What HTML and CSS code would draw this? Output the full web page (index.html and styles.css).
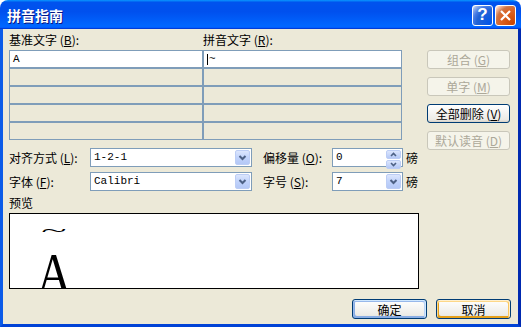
FILE: index.html
```html
<!DOCTYPE html>
<html lang="zh-CN">
<head>
    <meta charset="UTF-8">
    <title>拼音指南</title>
    <link rel="stylesheet" href="styles.css">
</head>
<body>
<div class="window">
    <div class="titlebar">
        <span class="title">拼音指南</span>
        <div class="caption-btns">
            <span class="cap-btn help">?</span>
            <span class="cap-btn close">
                <svg width="13" height="13" viewBox="0 0 13 13"><path d="M2 2 L11 11 M11 2 L2 11" stroke="#fff" stroke-width="2.2" fill="none"/></svg>
            </span>
        </div>
    </div>

    <div class="client">
        <div class="top">
            <div class="main">
                <div class="heads">
                    <span>基准文字 (<u>B</u>):</span>
                    <span>拼音文字 (<u>R</u>):</span>
                </div>
                <div class="ruby-grid">
                    <div class="cell on">A</div>
                    <div class="cell on"><span class="caret"></span>~</div>
                    <div class="cell"></div><div class="cell"></div>
                    <div class="cell"></div><div class="cell"></div>
                    <div class="cell"></div><div class="cell"></div>
                    <div class="cell"></div><div class="cell"></div>
                </div>
            </div>
            <div class="side">
                <span class="btn disabled">组合 (<u>G</u>)</span>
                <span class="btn disabled">单字 (<u>M</u>)</span>
                <span class="btn">全部删除 (<u>V</u>)</span>
                <span class="btn disabled">默认读音 (<u>D</u>)</span>
            </div>
        </div>

        <div class="opts">
            <div class="row">
                <span class="lbl">对齐方式 (<u>L</u>):</span>
                <div class="combo wide">
                    <span class="val">1-2-1</span>
                    <span class="drop"><svg width="13" height="13" viewBox="0 0 13 13"><path d="M3.5 5 L6.5 8 L9.5 5" stroke="#4d6185" stroke-width="2" fill="none"/></svg></span>
                </div>
                <span class="lbl lbl2">偏移量 (<u>O</u>):</span>
                <div class="combo narrow">
                    <span class="val">0</span>
                    <span class="spin">
                        <span class="half"><svg width="13" height="7" viewBox="0 0 13 7"><path d="M4 5 L6.5 2.5 L9 5" stroke="#4d6185" stroke-width="1.6" fill="none"/></svg></span>
                        <span class="half"><svg width="13" height="7" viewBox="0 0 13 7"><path d="M4 2 L6.5 4.5 L9 2" stroke="#4d6185" stroke-width="1.6" fill="none"/></svg></span>
                    </span>
                </div>
                <span class="unit">磅</span>
            </div>
            <div class="row">
                <span class="lbl">字体 (<u>F</u>):</span>
                <div class="combo wide">
                    <span class="val">Calibri</span>
                    <span class="drop"><svg width="13" height="13" viewBox="0 0 13 13"><path d="M3.5 5 L6.5 8 L9.5 5" stroke="#4d6185" stroke-width="2" fill="none"/></svg></span>
                </div>
                <span class="lbl lbl2">字号 (<u>S</u>):</span>
                <div class="combo narrow">
                    <span class="val">7</span>
                    <span class="drop"><svg width="13" height="13" viewBox="0 0 13 13"><path d="M3.5 5 L6.5 8 L9.5 5" stroke="#4d6185" stroke-width="2" fill="none"/></svg></span>
                </div>
                <span class="unit">磅</span>
            </div>
        </div>

        <div class="preview-label">预览</div>
        <div class="preview">
            <div class="sample">
                <span class="mark">~</span>
                <span class="base">A</span>
            </div>
        </div>

        <div class="footer">
            <span class="btn big default">确定</span>
            <span class="btn big hot">取消</span>
        </div>
    </div>
</div>
</body>
</html>
```

FILE: styles.css
```css
* {
    box-sizing: border-box;
}

body {
    margin: 0;
    background: #fff;
    font-family: "Noto Sans CJK SC", sans-serif;
    font-size: 12px;
    color: #000;
}

.window {
    width: 521px;
    height: 327px;
    display: flex;
    flex-direction: column;
}

.titlebar {
    height: 29px;
    flex: none;
    border-radius: 8px 8px 0 0;
    background: linear-gradient(180deg, #0997ff, #0053ee 8%, #0050ee 40%, #0066ff 88%, #0066ff 93%, #005bff 95%, #003dd7 96%, #003dd7);
    display: flex;
    align-items: center;
    justify-content: space-between;
    padding: 0 5px 0 7px;
}

.title {
    color: #fff;
    font-weight: bold;
    font-size: 14px;
    text-shadow: 1px 1px #0a1883;
}

.caption-btns {
    display: flex;
    gap: 2px;
    margin-top: 1px;
}

.cap-btn {
    width: 21px;
    height: 21px;
    border: 1px solid #fff;
    border-radius: 3px;
    display: flex;
    align-items: center;
    justify-content: center;
    color: #fff;
}

.help {
    background: radial-gradient(circle at 90% 90%, #0054e9 0%, #2263d5 55%, #4479e4 70%, #a3bbec 90%, #fff 100%);
    font-family: "Liberation Sans", sans-serif;
    font-weight: bold;
    font-size: 17px;
}

.close {
    background: radial-gradient(circle at 90% 90%, #cc4600 0%, #dc6527 55%, #cd7546 70%, #ffccb2 90%, #fff 100%);
}

.client {
    flex: 1;
    background: #ece9d8;
    border-left: 3px solid #0b5be8;
    border-right: 3px solid #0029b0;
    border-bottom: 3px solid #0042d6;
    padding: 3px 0 0 6px;
}

.top {
    display: flex;
    align-items: flex-start;
    height: 108px;
}

.main {
    width: 393px;
}

.heads {
    display: grid;
    grid-template-columns: 194px 1fr;
    height: 18px;
    line-height: 16px;
}

.ruby-grid {
    display: grid;
    grid-template-columns: 192px 197px;
    grid-auto-rows: 16px;
    gap: 2px;
    padding: 1px;
    background: #7f9db9;
}

.cell {
    background: #ece9d8;
}

.cell.on {
    background: #fff;
    padding-left: 3px;
    font-family: "Liberation Mono", monospace;
    font-size: 11px;
    line-height: 16px;
    display: flex;
    align-items: center;
}

.caret {
    display: inline-block;
    width: 1px;
    height: 11px;
    background: #000;
    margin-right: 1px;
}

.side {
    margin-left: 25px;
    margin-top: 18px;
    display: flex;
    flex-direction: column;
    gap: 8px;
}

.btn {
    width: 83px;
    height: 19px;
    border: 1px solid #003c74;
    border-radius: 3px;
    background: linear-gradient(180deg, #fff, #ecebe6 85%, #d6d0c5);
    display: flex;
    align-items: center;
    justify-content: center;
    font-size: 12px;
}

.btn.disabled {
    border-color: #c9c7ba;
    background: #f5f4ea;
    color: #aca899;
}

.btn.big {
    width: 75px;
    height: 20px;
}

.btn.default {
    box-shadow: inset -1px 1px #cee7ff, inset 1px 2px #98b8ea, inset -2px 2px #bcd4f6, inset 1px -1px #89ade4, inset 2px -2px #89ade4;
}

.btn.hot {
    box-shadow: inset -1px 1px #fff0cf, inset 1px 2px #fdd889, inset -2px 2px #fbc761, inset 2px -2px #e5a01a;
}

.opts {
    margin-top: 8px;
    display: flex;
    flex-direction: column;
    gap: 5px;
}

.row {
    display: flex;
    align-items: center;
    height: 19px;
}

.lbl {
    width: 81px;
}

.lbl2 {
    margin-left: 11px;
    width: 69px;
}

.combo {
    display: flex;
    height: 19px;
    border: 1px solid #7f9db9;
    background: #fff;
}

.combo.wide {
    width: 162px;
}

.combo.narrow {
    width: 71px;
}

.val {
    flex: 1;
    padding-left: 3px;
    font-family: "Liberation Mono", monospace;
    font-size: 11px;
    line-height: 17px;
}

.drop {
    width: 15px;
    height: 15px;
    margin: 1px;
    border-radius: 2px;
    border: 1px solid #bccdf5;
    background: linear-gradient(180deg, #dce6fd, #c1d3fb 50%, #b4c8f6);
    display: flex;
    align-items: center;
    justify-content: center;
}

.spin {
    width: 15px;
    margin: 1px;
    display: flex;
    flex-direction: column;
    gap: 1px;
}

.half {
    flex: 1;
    border-radius: 2px;
    border: 1px solid #bccdf5;
    background: linear-gradient(180deg, #dce6fd, #b4c8f6);
    display: flex;
    align-items: center;
    justify-content: center;
}

.unit {
    margin-left: 3px;
}

.preview-label {
    margin-top: 4px;
    height: 18px;
    line-height: 16px;
}

.preview {
    width: 410px;
    height: 76px;
    border: 1px solid #000;
    background: #fff;
    overflow: hidden;
    padding-left: 28px;
}

.sample {
    display: inline-flex;
    flex-direction: column;
    align-items: center;
    width: 32px;
}

.mark {
    font-family: "Liberation Serif", serif;
    font-size: 26px;
    height: 18px;
    line-height: 18px;
    transform: scale(1.8, 0.65);
    margin-top: 8px;
}

.base {
    font-family: "Liberation Serif", serif;
    font-size: 56px;
    line-height: 56px;
    transform: scaleX(0.85);
    margin-top: 6px;
}

.footer {
    margin-top: 10px;
    display: flex;
    justify-content: flex-end;
    gap: 9px;
    padding-right: 7px;
}
```
